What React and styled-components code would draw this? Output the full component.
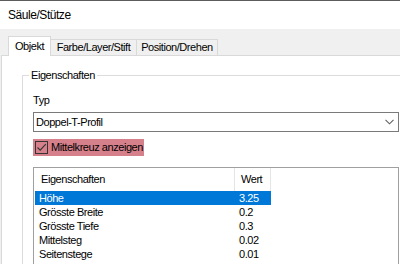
import React from "react";
import styled, { createGlobalStyle } from "styled-components";

const GlobalStyle = createGlobalStyle`
  body {
    margin: 0;
    background: #f0f0f0;
    font-family: "Liberation Sans", Arial, sans-serif;
    font-size: 11px;
    letter-spacing: -0.45px;
    color: #000;
  }
`;

const Window = styled.div`
  width: 400px;
  height: 264px;
  overflow: hidden;
  background: #f0f0f0;
  display: flex;
  flex-direction: column;
`;

const TitleBar = styled.div`
  height: 28px;
  flex-shrink: 0;
  border-top: 1px solid #5c5c5c;
  background: #fff;
  display: flex;
  align-items: center;
  padding-left: 8px;
  font-size: 12px;
`;

const TabStrip = styled.div`
  height: 26px;
  flex-shrink: 0;
  display: flex;
  align-items: flex-end;
  padding-left: 8px;
`;

const Tab = styled.div`
  box-sizing: border-box;
  height: ${(p) => (p.$active ? "20px" : "16px")};
  width: ${(p) => p.$w}px;
  margin-bottom: ${(p) => (p.$active ? "-1px" : "0")};
  margin-left: ${(p) => (p.$first ? "0" : "-1px")};
  position: relative;
  z-index: ${(p) => (p.$active ? 1 : 0)};
  background: ${(p) => (p.$active ? "#fff" : "#f0f0f0")};
  border: 1px solid #d9d9d9;
  border-bottom: none;
  display: flex;
  align-items: center;
  justify-content: center;
  line-height: 13px;
`;

const Panel = styled.div`
  flex: 1;
  margin-left: 1px;
  width: 440px;
  background: #fff;
  border-top: 1px solid #d9d9d9;
  border-left: 1px solid #d9d9d9;
  padding: 19px 0 0 20px;
`;

const GroupBox = styled.div`
  position: relative;
  border: 1px solid #dcdcdc;
  height: 260px;
  padding: 18px 0 0 10px;
`;

const GroupLegend = styled.span`
  position: absolute;
  top: -7px;
  left: 6px;
  padding: 0 2px;
  background: #fff;
  line-height: 13px;
`;

const FieldLabel = styled.div`
  line-height: 13px;
  margin-bottom: 5px;
`;

const Combo = styled.div`
  box-sizing: border-box;
  width: 366px;
  height: 20px;
  border: 1px solid #7a7a7a;
  background: #fff;
  display: flex;
  align-items: center;
  justify-content: space-between;
  padding: 0 4px 0 2px;
  line-height: 13px;
`;

const CheckRow = styled.label`
  box-sizing: border-box;
  margin-top: 7px;
  height: 17px;
  width: 111px;
  background: #d6808b;
  display: flex;
  align-items: center;
  gap: 3px;
  padding-left: 2px;
  line-height: 13px;
`;

const CheckBox = styled.span`
  box-sizing: border-box;
  width: 13px;
  height: 13px;
  border: 1px solid #333;
  display: flex;
  align-items: center;
  justify-content: center;
`;

const ListView = styled.div`
  margin-top: 11px;
  width: 366px;
  height: 120px;
  box-sizing: border-box;
  border: 1px solid #a0a0a0;
  background: #fff;
`;

const HeaderRow = styled.div`
  display: flex;
  height: 23px;
`;

const HeaderCell = styled.div`
  box-sizing: border-box;
  width: ${(p) => p.$w}px;
  padding-left: ${(p) => p.$pad}px;
  border-right: 1px solid #e5e5e5;
  display: flex;
  align-items: center;
  line-height: 13px;
`;

const Row = styled.div`
  display: flex;
  margin-left: 1px;
  width: 236px;
  height: 14px;
  line-height: 14px;
  background: ${(p) => (p.$selected ? "#0078d7" : "transparent")};
  color: ${(p) => (p.$selected ? "#fff" : "#000")};
`;

const Cell = styled.div`
  box-sizing: border-box;
  width: ${(p) => p.$w}px;
  padding-left: 4px;
  white-space: nowrap;
`;

const rows = [
  { name: "Höhe", value: "3.25" },
  { name: "Grösste Breite", value: "0.2" },
  { name: "Grösste Tiefe", value: "0.3" },
  { name: "Mittelsteg", value: "0.02" },
  { name: "Seitenstege", value: "0.01" },
];

export default function App() {
  return (
    <>
      <GlobalStyle />
      <Window>
        <TitleBar>Säule/Stütze</TitleBar>
        <TabStrip>
          <Tab $active $first $w={43}>Objekt</Tab>
          <Tab $w={87}>Farbe/Layer/Stift</Tab>
          <Tab $w={82}>Position/Drehen</Tab>
        </TabStrip>
        <Panel>
          <GroupBox>
            <GroupLegend>Eigenschaften</GroupLegend>
            <FieldLabel>Typ</FieldLabel>
            <Combo>
              <span>Doppel-T-Profil</span>
              <svg width="9" height="6" viewBox="0 0 9 6">
                <path d="M0.5 0.8 L4.5 4.8 L8.5 0.8" fill="none" stroke="#606060" strokeWidth="1.1" />
              </svg>
            </Combo>
            <CheckRow>
              <CheckBox>
                <svg width="11" height="11" viewBox="0 0 11 11">
                  <path d="M1.5 5.5 L4.2 8.2 L9.8 2.2" fill="none" stroke="#333" strokeWidth="1.1" />
                </svg>
              </CheckBox>
              <span>Mittelkreuz anzeigen</span>
            </CheckRow>
            <ListView>
              <HeaderRow>
                <HeaderCell $w={201} $pad={7}>Eigenschaften</HeaderCell>
                <HeaderCell $w={36} $pad={6}>Wert</HeaderCell>
              </HeaderRow>
              {rows.map((r, i) => (
                <Row key={r.name} $selected={i === 0}>
                  <Cell $w={200}>{r.name}</Cell>
                  <Cell $w={36}>{r.value}</Cell>
                </Row>
              ))}
            </ListView>
          </GroupBox>
        </Panel>
      </Window>
    </>
  );
}
